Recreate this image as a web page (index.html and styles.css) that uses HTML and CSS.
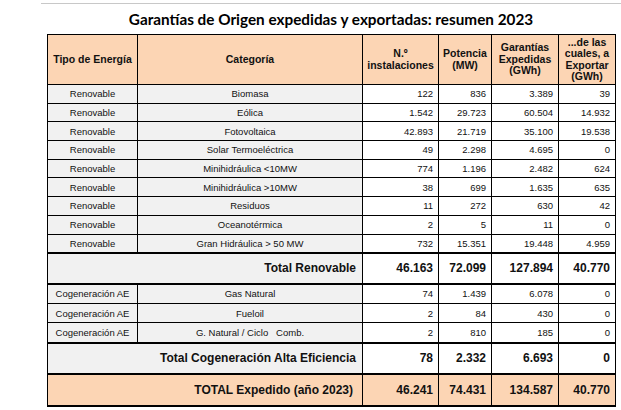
FILE: index.html
```html
<!DOCTYPE html>
<html lang="es">
<head>
<meta charset="utf-8">
<link rel="stylesheet" href="styles.css">
</head>
<body>
<div class="page">
  <div class="rule"></div>
  <h1 class="title">Garantías de Origen expedidas y exportadas: resumen 2023</h1>
  <table class="summary">
    <colgroup>
      <col class="c-tipo"><col class="c-cat"><col class="c-inst"><col class="c-pot"><col class="c-gar"><col class="c-exp">
    </colgroup>
    <thead>
      <tr class="head">
        <th>Tipo de Energía</th>
        <th>Categoría</th>
        <th>N.º<br>instalaciones</th>
        <th>Potencia<br>(MW)</th>
        <th>Garantías<br>Expedidas<br>(GWh)</th>
        <th>...de las<br>cuales, a<br>Exportar<br>(GWh)</th>
      </tr>
    </thead>
    <tbody>
      <tr class="row"><td class="lbl">Renovable</td><td class="lbl">Biomasa</td><td>122</td><td>836</td><td>3.389</td><td>39</td></tr>
      <tr class="row"><td class="lbl">Renovable</td><td class="lbl">Eólica</td><td>1.542</td><td>29.723</td><td>60.504</td><td>14.932</td></tr>
      <tr class="row"><td class="lbl">Renovable</td><td class="lbl">Fotovoltaica</td><td>42.893</td><td>21.719</td><td>35.100</td><td>19.538</td></tr>
      <tr class="row"><td class="lbl">Renovable</td><td class="lbl">Solar Termoeléctrica</td><td>49</td><td>2.298</td><td>4.695</td><td>0</td></tr>
      <tr class="row"><td class="lbl">Renovable</td><td class="lbl">Minihidráulica &lt;10MW</td><td>774</td><td>1.196</td><td>2.482</td><td>624</td></tr>
      <tr class="row"><td class="lbl">Renovable</td><td class="lbl">Minihidráulica &gt;10MW</td><td>38</td><td>699</td><td>1.635</td><td>635</td></tr>
      <tr class="row"><td class="lbl">Renovable</td><td class="lbl">Residuos</td><td>11</td><td>272</td><td>630</td><td>42</td></tr>
      <tr class="row"><td class="lbl">Renovable</td><td class="lbl">Oceanotérmica</td><td>2</td><td>5</td><td>11</td><td>0</td></tr>
      <tr class="row"><td class="lbl">Renovable</td><td class="lbl">Gran Hidráulica &gt; 50 MW</td><td>732</td><td>15.351</td><td>19.448</td><td>4.959</td></tr>
      <tr class="total"><td class="lbl" colspan="2">Total Renovable</td><td>46.163</td><td>72.099</td><td>127.894</td><td>40.770</td></tr>
      <tr class="row cog"><td class="lbl">Cogeneración AE</td><td class="lbl">Gas Natural</td><td>74</td><td>1.439</td><td>6.078</td><td>0</td></tr>
      <tr class="row cog"><td class="lbl">Cogeneración AE</td><td class="lbl">Fueloil</td><td>2</td><td>84</td><td>430</td><td>0</td></tr>
      <tr class="row cog"><td class="lbl">Cogeneración AE</td><td class="lbl">G. Natural / Ciclo &nbsp; Comb.</td><td>2</td><td>810</td><td>185</td><td>0</td></tr>
      <tr class="total tall"><td class="lbl" colspan="2">Total Cogeneración Alta Eficiencia</td><td>78</td><td>2.332</td><td>6.693</td><td>0</td></tr>
      <tr class="total tall grand"><td class="lbl" colspan="2">TOTAL Expedido (año 2023)</td><td>46.241</td><td>74.431</td><td>134.587</td><td>40.770</td></tr>
    </tbody>
  </table>
</div>
</body>
</html>
```
FILE: styles.css
```css
html, body {
  margin: 0;
  padding: 0;
  background: #ffffff;
}
.page {
  padding: 3px 0 0 47px;
}
.rule {
  height: 0;
  margin-left: -6px;
  border-top: 1px solid #c8c8c8;
}
.title {
  width: 568px;
  margin: 5px 0 0 0;
  height: 25px;
  text-align: center;
  font-family: Lato, "Open Sans", sans-serif;
  font-weight: 700;
  font-size: 15.3px;
  line-height: 20px;
  color: #000;
}
.summary {
  border-collapse: collapse;
  table-layout: fixed;
  width: 568px;
  font-family: "Liberation Sans", Arial, sans-serif;
  color: #111;
  border-left: 1px solid #000;
  border-right: 1px solid #000;
  border-bottom: 2px solid #000;
}
.c-tipo { width: 90px; }
.c-cat { width: 225px; }
.c-inst { width: 76px; }
.c-pot { width: 53px; }
.c-gar { width: 67px; }
.c-exp { width: 57px; }

.summary th,
.summary td {
  border: 1px solid #000;
  padding: 0 5px 0 3px;
}
.head th {
  height: 49px;
  background: #fcd5b4;
  font-size: 10.5px;
  font-weight: 700;
  line-height: 11.5px;
  text-align: center;
  padding: 0 2px;
}
.row td {
  height: 17.7px;
  font-size: 9.5px;
  text-align: right;
  background: #fff;
}
.row.cog td {
  height: 18.3px;
}
.row td.lbl {
  text-align: center;
  background: #f1f1f1;
  padding: 0 2px;
}
.total td {
  height: 28.5px;
  font-size: 12px;
  font-weight: 700;
  text-align: right;
  background: #fff;
  border-top: 2px solid #000;
  border-bottom: 2px solid #000;
}
.total.tall td {
  height: 29.5px;
}
.total td.lbl {
  background: #f1f1f1;
  padding-right: 6px;
}
.grand td,
.grand td.lbl {
  background: #fcd5b4;
}
.grand td.lbl {
  padding-right: 9px;
}
```
